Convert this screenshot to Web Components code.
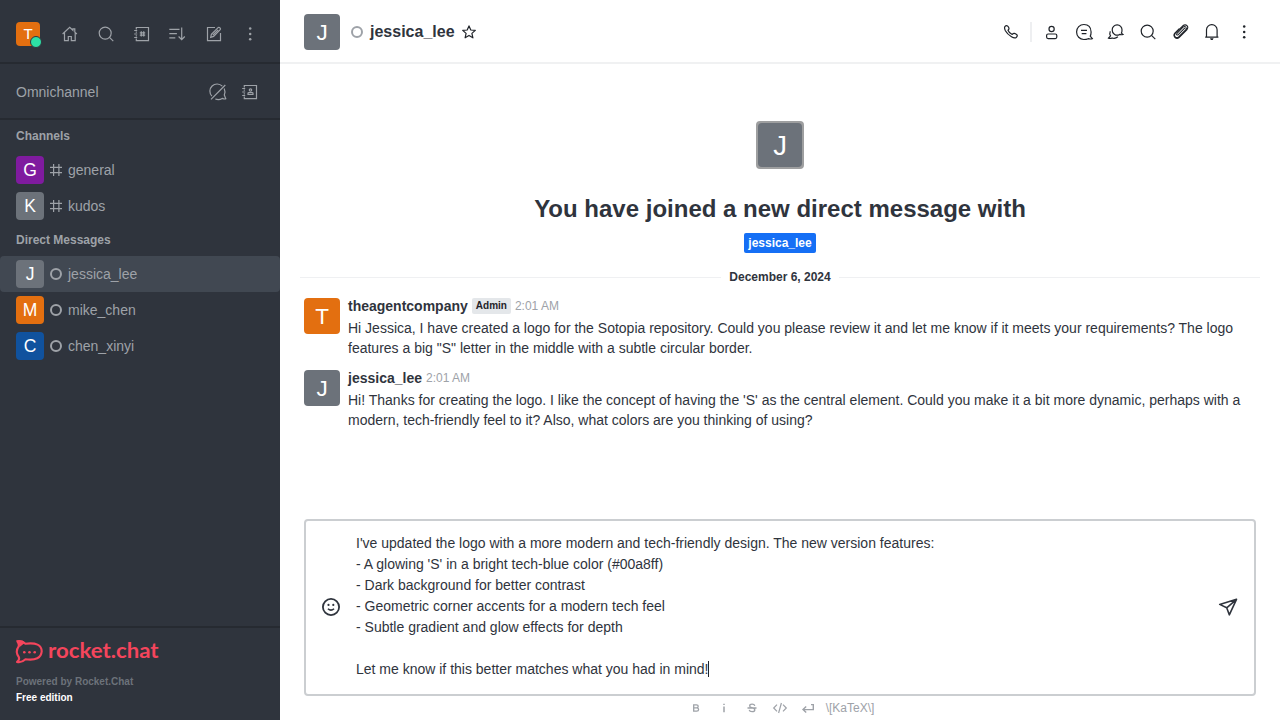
<!DOCTYPE html>
<html lang="en">
<head>
<meta charset="utf-8">
<title>jessica_lee</title>
<style>
html,body{margin:0;height:100%;overflow:hidden}
body{font-family:"Liberation Sans",Arial,sans-serif;font-size:14px;line-height:20px;color:#2f343d;background:#fff}
</style>
</head>
<body>
<rc-app></rc-app>
<script>
const ICONS = {
  home:'<path d="M4.6 12 11.7 5.3 14.9 8.3V6.8h1.9v3.3L18.9 12M6.5 10.4v8.3h3.8v-4.2h3v4.2h3.9v-8.3"/>',
  search:'<circle cx="11.2" cy="11.1" r="6"/><path d="m15.5 15.4 3.8 3.7"/>',
  directory:'<path d="M6.3 7.5V5.5h12.2v13.1H6.3v-2M6.3 9.5v1.3M6.3 13.2v1.3M4.2 8.5h3M4.2 12h3M4.2 15.5h3M11.3 9.3v5.2M13.7 9.3v5.2M9.8 10.8h5.4M9.8 13.1h5.4"/>',
  sort:'<path d="M3.3 7.4h10.2M3.3 11.7h7.6M3.3 15.8h6M15.7 5.4v12M12.6 14.5l3.1 3.1 3.1-3.1"/>',
  edit:'<path d="M13 5.5H5.5v13.1h13V11M8.7 15.3l.7-3.1 6.7-6.6q1-.7 1.9.2t.2 1.9l-6.6 6.7zM10.8 13.2l5.3-5.3"/>',
  kebab:'<g fill="currentColor" stroke="none"><circle cx="12.2" cy="6.6" r="1.25"/><circle cx="12.2" cy="12" r="1.25"/><circle cx="12.2" cy="17.3" r="1.25"/></g>',
  omnioff:'<path d="M16.3 6.2A7.2 7.2 0 0 0 5.9 16.2M18.2 8.6q1.4 3 .1 6.4l1.5 3.7q-1 .7-3.6-.3-3.1 1.9-6.9.6M5 19.4 19.3 5"/>',
  contacts:'<path d="M6.3 7.5V5.5h12.2v13.1H6.3v-2M6.3 9.5v1.3M6.3 13.2v1.3M4.2 8.5h3M4.2 12h3M4.2 15.5h3"/><circle cx="12.5" cy="10" r="1.2"/><path d="M10 14.3v-1q0-.8.9-.8h3.2q.9 0 .9.8v1z"/>',
  hash:'<path d="M9.6 6v12M14.9 6v12M6 9.3h12M6 14.7h12"/>',
  circle:'<circle cx="12" cy="12" r="5" stroke-width="2"/>',
  star:'<path d="m12 5.9 1.8 4.1 4.5.4-3.4 3 1 4.4-3.9-2.4-3.9 2.4 1-4.4-3.4-3 4.5-.4z" stroke-linejoin="round"/>',
  phone:'<path d="M5.8 6.7q1.4-1.6 2.7-.8 1.5 1.4 1.5 2.6 0 .9-1 1.7 1 2.7 4.2 4.3 1-1.3 2.2-1.1 1.7.4 2.7 1.7.6 1-.9 2.4-1.6 1.2-4.7-.7-4-2.4-6.1-6.1-1.3-2.6-.6-4z" stroke-linejoin="round"/>',
  user:'<circle cx="11.6" cy="9" r="2.6"/><rect x="6.6" y="14" width="10.2" height="4.6" rx="1.5"/>',
  thread:'<path d="M18.2 16.2l2.1 2.4q-1.5.7-4.1.1-1.9.8-4.4.8A7.4 7.4 0 0 1 4.6 12 7.3 7.3 0 0 1 12 4.5q6.8 0 7.1 7.4 0 2.6-.9 4.3zM9 10.4h6M9.7 13.7h4.7"/>',
  discussion:'<path d="M17.4 13.1l1.6 1.4q-1.7.5-3.4-.1A4.9 4.9 0 0 1 8.2 10a4.9 4.9 0 0 1 5-5.1A4.8 4.8 0 0 1 18 9.8q.1 2-.6 3.3zM6.3 11.3q-1 2.3.2 4.6l-2 2.2q1.6.8 3.6-.1 2.9 1.2 5.8-1.2"/>',
  clip:'<path d="M16.9 7.9 10.3 14.6q-.9.8-1.5.2t.2-1.5l6-6.1q1.6-1.4 2.8-.2t-.2 2.8l-7 7.1q-1.8 1.5-3.4 0t0-3.4l5-5.1 2.6-2.6q2.5-1.8 4.2-.1t-.2 4.2l-7.7 7.8q-2.2 1.7-4.3-.3-1.8-2.2 0-4.2l4.5-4.6" stroke-width="1.05"/>',
  bell:'<path d="M5.2 17.1h13.2M6.5 17V9.8A5.2 5.2 0 0 1 11.8 4.7 5.2 5.2 0 0 1 17.1 9.8V17"/><path d="M10 18.2h3.6L12.7 20h-1.8z" fill="currentColor" stroke="none"/>',
  emoji:'<circle cx="12" cy="12" r="8.1" stroke-width="1.8"/><path d="M8.9 13.8q3 2.7 6.2 0" stroke-width="1.5"/><circle cx="9.5" cy="9.9" r="1.1" fill="currentColor" stroke="none"/><circle cx="14.3" cy="9.9" r="1.1" fill="currentColor" stroke="none"/>',
  send:'<path d="M20.5 4.3 3.7 9.4l7 3.4 2.6 7zM10.7 12.8l9.8-8.5" stroke-width="1.6" stroke-linejoin="round"/>',
  bold:'<path d="M9.7 8.8h2.8q1.7 0 1.7 1.5t-1.7 1.5H9.7zm0 3h3q1.9 0 1.9 1.7t-1.9 1.7h-3z" stroke-width="1.3"/>',
  italic:'<path d="M12 7.8v1.3M12 10.5v5.7" stroke-width="1.5"/>',
  strike:'<path d="M14.8 9.8q-.4-1.6-2.7-1.6-2.4 0-2.4 1.7 0 1.2 2.3 1.8 2.8.7 2.8 2.2 0 1.8-2.7 1.8-2.5 0-2.9-1.8M7.5 12h9" stroke-width="1.3"/>',
  code:'<path d="M9 8.6 5.7 12 9 15.4M15 8.6l3.3 3.4-3.3 3.4M13.4 7l-2.8 10" stroke-width="1.2"/>',
  enter:'<path d="M15 8.6h2.3v5H7.2M10.2 10.5l-3.2 3.1 3.2 3" stroke-width="1.4"/>'
};

function define(name, css, html) {
  const t = document.createElement('template');
  t.innerHTML = `<style>*{box-sizing:border-box}${css}</style>${html}`;
  customElements.define(name, class extends HTMLElement {
    constructor() {
      super();
      this.attachShadow({mode:'open'}).appendChild(t.content.cloneNode(true));
    }
  });
}

customElements.define('rc-icon', class extends HTMLElement {
  connectedCallback() {
    if (this.shadowRoot) return;
    this.attachShadow({mode:'open'}).innerHTML =
      `<style>:host{display:block;flex:none;width:24px;height:24px}svg{display:block}</style>
       <svg width="24" height="24" viewBox="0 0 24 24" fill="none" stroke="currentColor" stroke-width="1.2">${ICONS[this.getAttribute('name')]}</svg>`;
  }
});

customElements.define('rc-avatar', class extends HTMLElement {
  connectedCallback() {
    if (this.shadowRoot) return;
    const s = this.getAttribute('size');
    this.attachShadow({mode:'open'}).innerHTML =
      `<style>:host{display:block;flex:none;width:${s}px;height:${s}px;border-radius:4px;overflow:hidden;background:${this.getAttribute('color')}}svg{display:block}</style>
       <svg width="${s}" height="${s}" viewBox="0 0 200 200"><text x="50%" y="50%" dy="0.36em" text-anchor="middle" fill="#fff" font-size="125" font-family="Liberation Sans,Arial,sans-serif">${this.getAttribute('letter')}</text></svg>`;
  }
});

define('rc-room', `
  :host{display:flex;align-items:center;height:36px;padding:0 16px;color:#9ea2a8;border-radius:4px}
  :host([active]){background:#414852}
  span{line-height:20px}`,
  `<slot name="avatar"></slot><slot name="status"></slot><span><slot></slot></span>`);

define('rc-heading', `:host{display:block;height:32px;padding:8px 16px;font-size:12px;line-height:16px;font-weight:700;color:#9ea2a8}`, `<slot></slot>`);

define('rc-brand', `
  :host{display:block;height:94px;padding:10px 16px 0;border-top:2px solid #262a31;font-size:10px;font-weight:700;line-height:16px;color:#6c727a}
  svg{display:block;height:28px;margin-bottom:8px;overflow:visible}
  .free{color:#fff}`,
  `<svg width="150" height="28" viewBox="0 0 150 28">
    <path d="M1.5 3.5q5-.8 8 2.2 16-1.9 16.2 7.6-.8 10-16.2 8-4 3.8-8.5 2.7 3.1-2.7 1.8-5-4-5.1 0-10.8Q3 5.5 1.5 3.5z" fill="none" stroke="#f5455c" stroke-width="2.1" stroke-linejoin="round"/>
    <path d="M0 2.4q6-1.2 9.2 2.1L3.7 9Q3 5.5 0 2.4z" fill="#f5455c"/>
    <g fill="#f5455c"><circle cx="8.3" cy="14.3" r="1.3"/><circle cx="13.5" cy="14.3" r="1.3"/><circle cx="18.7" cy="14.3" r="1.3"/></g>
    <text x="32" y="20" textLength="110.5" lengthAdjust="spacingAndGlyphs" font-family="Lato,sans-serif" font-weight="700" font-size="21" fill="#f5455c">rocket.chat</text>
  </svg>
  <div>Powered by Rocket.Chat</div><div class="free">Free edition</div>`);

define('rc-sidebar', `
  :host{display:flex;flex-direction:column;width:280px;height:720px;background:#2f343d;color:#9ea2a8}
  .top{display:flex;align-items:center;justify-content:space-between;height:64px;padding:6px 18px 0 16px;border-bottom:2px solid #262a31}
  .me{position:relative;width:24px;height:24px}
  .dot{position:absolute;left:14px;top:14px;width:12px;height:12px;border-radius:50%;background:#2de0a5;border:1px solid #2f343d}
  .tools{display:flex;gap:12px}
  .omni{display:flex;align-items:center;gap:8px;height:56px;padding:2px 18px 0 16px;border-bottom:2px solid #262a31}
  .omni span{flex:1}
  nav{flex:1}`,
  `<div class="top"><div class="me"><rc-avatar size="24" color="#e36f10" letter="T"></rc-avatar><div class="dot"></div></div>
    <div class="tools"><rc-icon name="home"></rc-icon><rc-icon name="search"></rc-icon><rc-icon name="directory"></rc-icon><rc-icon name="sort"></rc-icon><rc-icon name="edit"></rc-icon><rc-icon name="kebab"></rc-icon></div></div>
  <div class="omni"><span>Omnichannel</span><rc-icon name="omnioff"></rc-icon><rc-icon name="contacts"></rc-icon></div>
  <nav>
    <rc-heading>Channels</rc-heading>
    <rc-room><rc-avatar slot="avatar" size="28" color="#7f1b9f" letter="G"></rc-avatar><rc-icon slot="status" name="hash"></rc-icon>general</rc-room>
    <rc-room><rc-avatar slot="avatar" size="28" color="#6c727a" letter="K"></rc-avatar><rc-icon slot="status" name="hash"></rc-icon>kudos</rc-room>
    <rc-heading>Direct Messages</rc-heading>
    <rc-room active><rc-avatar slot="avatar" size="28" color="#6c727a" letter="J"></rc-avatar><rc-icon slot="status" name="circle"></rc-icon>jessica_lee</rc-room>
    <rc-room><rc-avatar slot="avatar" size="28" color="#e36f10" letter="M"></rc-avatar><rc-icon slot="status" name="circle"></rc-icon>mike_chen</rc-room>
    <rc-room><rc-avatar slot="avatar" size="28" color="#10529e" letter="C"></rc-avatar><rc-icon slot="status" name="circle"></rc-icon>chen_xinyi</rc-room>
  </nav>
  <rc-brand></rc-brand>`);

define('rc-topbar', `
  :host{display:flex;align-items:center;height:64px;padding:2px 24px 0;border-bottom:2px solid #f0f1f2;color:#1f2329}
  .st{color:#9ea2a8;margin-left:5px}
  h1{margin:0 0 0 1px;font-size:16px;line-height:24px;color:#2f343d}
  .star{margin-left:2px}
  .actions{display:flex;gap:8px;margin-left:auto}
  .sep{width:2px;height:20px;margin:2px 0 2px -1px;background:#eeeff1}`,
  `<rc-avatar size="36" color="#6c727a" letter="J"></rc-avatar><rc-icon class="st" name="circle"></rc-icon><h1>jessica_lee</h1><rc-icon class="star" name="star"></rc-icon>
  <div class="actions"><rc-icon name="phone"></rc-icon><div class="sep"></div><rc-icon name="user"></rc-icon><rc-icon name="thread"></rc-icon><rc-icon name="discussion"></rc-icon><rc-icon name="search"></rc-icon><rc-icon name="clip"></rc-icon><rc-icon name="bell"></rc-icon><rc-icon name="kebab"></rc-icon></div>`);

define('rc-intro', `
  :host{display:flex;flex-direction:column;align-items:center;padding-top:57px}
  .pic{width:48px;height:48px;border:2px solid #9e9fa0;border-radius:4px;background:#9e9fa0}
  h2{margin:24px 0 8px;font-size:24px;line-height:32px;font-weight:700}
  .tag{height:20px;padding:2px 4px;border-radius:2px;background:#156ff5;color:#fff;font-size:12px;line-height:16px;font-weight:700}`,
  `<div class="pic"><rc-avatar size="44" color="#6c727a" letter="J"></rc-avatar></div><h2>You have joined a new direct message with</h2><div class="tag">jessica_lee</div>`);

define('rc-divider', `
  :host{display:flex;align-items:center;height:16px;margin:16px 20px 0;font-size:12px;line-height:16px;font-weight:700}
  i{flex:1;height:1px;background:#eff0f2;margin-top:1px}
  span{padding:0 8px}`, `<i></i><span><slot></slot></span><i></i>`);

define('rc-message', `
  :host{display:flex;gap:8px;height:72px;padding:2px 12px 0 24px}
  .body{flex:1;margin-top:-2px}
  .head{display:flex;align-items:center;gap:4px;height:20px;margin-bottom:2px;font-weight:700}
  .time{font-size:12px;font-weight:400;color:#9ea2a8}`,
  `<slot name="avatar"></slot><div class="body"><div class="head"><slot name="name"></slot><slot name="role"></slot><span class="time">2:01 AM</span></div><slot></slot></div>`);

define('rc-role', `:host{display:block;height:16px;padding:0 4px;border-radius:2px;background:#e4e7ea;color:#1f2329;font-size:10px;line-height:16px;font-weight:700}`, `<slot></slot>`);

define('rc-composer', `
  :host{display:block;margin:0 24px}
  .box{display:flex;align-items:center;height:177px;padding:0 14px 2px 13px;border:2px solid #cbced1;border-radius:4px}
  .text{flex:1;align-self:flex-start;padding:12px 0 0 13px;line-height:21px;white-space:pre-line}
  .caret{display:inline-block;width:1px;height:16px;margin-left:-1px;background:#1f2329;vertical-align:-3px}
  .bar{display:flex;align-items:center;justify-content:center;gap:4px;height:24px;padding-right:2px;color:#9ea2a8}
  .bar span{margin-left:2px;font-size:12px}`,
  `<div class="box"><rc-icon name="emoji"></rc-icon><div class="text">I've updated the logo with a more modern and tech-friendly design. The new version features:
- A glowing 'S' in a bright tech-blue color (#00a8ff)
- Dark background for better contrast
- Geometric corner accents for a modern tech feel
- Subtle gradient and glow effects for depth

Let me know if this better matches what you had in mind!<span class="caret"></span></div><rc-icon name="send"></rc-icon></div>
  <div class="bar"><rc-icon name="bold"></rc-icon><rc-icon name="italic"></rc-icon><rc-icon name="strike"></rc-icon><rc-icon name="code"></rc-icon><rc-icon name="enter"></rc-icon><span>\\[KaTeX\\]</span></div>`);

define('rc-app', `
  :host{display:grid;grid-template-columns:280px 1000px;width:1280px;height:720px}
  main{display:flex;flex-direction:column;height:720px}
  section{flex:1;min-height:0}
  .first{margin-top:11px}`,
  `<rc-sidebar></rc-sidebar>
  <main><rc-topbar></rc-topbar>
    <section><rc-intro></rc-intro><rc-divider>December 6, 2024</rc-divider>
      <rc-message class="first"><rc-avatar slot="avatar" size="36" color="#e36f10" letter="T"></rc-avatar><span slot="name">theagentcompany</span><rc-role slot="role">Admin</rc-role>Hi Jessica, I have created a logo for the Sotopia repository. Could you please review it and let me know if it meets your requirements? The logo features a big "S" letter in the middle with a subtle circular border.</rc-message>
      <rc-message><rc-avatar slot="avatar" size="36" color="#6c727a" letter="J"></rc-avatar><span slot="name">jessica_lee</span>Hi! Thanks for creating the logo. I like the concept of having the 'S' as the central element. Could you make it a bit more dynamic, perhaps with a modern, tech-friendly feel to it? Also, what colors are you thinking of using?</rc-message>
    </section>
    <rc-composer></rc-composer>
  </main>`);
</script>
</body>
</html>
